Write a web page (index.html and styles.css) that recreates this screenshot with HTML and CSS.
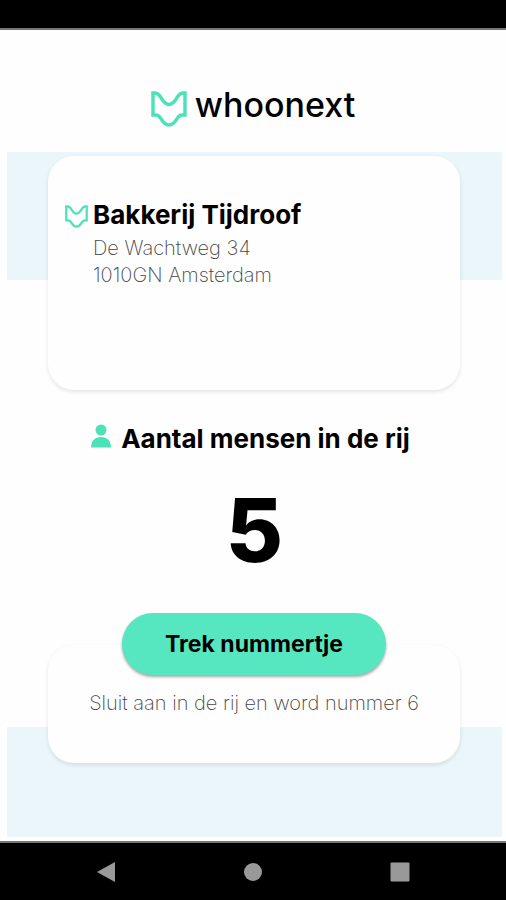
FILE: index.html
```html
<!DOCTYPE html>
<html lang="nl">
<head>
<meta charset="utf-8">
<meta name="viewport" content="width=device-width, initial-scale=1">
<title>whoonext</title>
<link rel="stylesheet" href="styles.css">
</head>
<body>
<div class="status-bar"></div>
<header class="brand">
  <svg class="brand-mark" viewBox="0 0 36 36" aria-hidden="true"><path d="M2 2H4C11 2 10 13.500 18 13.500S25 2 32 2H34V24H31C25 24 26 34 18 34S11 24 5 24H2Z"/></svg>
  <span class="brand-name">whoonext</span>
</header>
<main class="content">
  <section class="shop">
    <div class="card shop-card">
      <svg class="shop-mark" viewBox="0 0 36 36" aria-hidden="true"><path d="M2 2H4C11 2 10 13.500 18 13.500S25 2 32 2H34V24H31C25 24 26 34 18 34S11 24 5 24H2Z"/></svg>
      <div>
        <h1 class="title">Bakkerij Tijdroof</h1>
        <address class="detail">De Wachtweg 34<br>1010GN Amsterdam</address>
      </div>
    </div>
  </section>
  <section class="queue">
    <h2 class="title queue-title">
      <svg class="person" viewBox="0 0 20 24" aria-hidden="true"><circle cx="10" cy="6" r="5.500"/><path d="M0 23.500C0 17 4 13 10 13S20 17 20 23.500Z"/></svg>
      Aantal mensen in de rij
    </h2>
    <p class="count">5</p>
  </section>
  <section class="join">
    <div class="card join-card">
      <button class="join-button" type="button">Trek nummertje</button>
      <p class="detail">Sluit aan in de rij en word nummer 6</p>
    </div>
  </section>
</main>
<nav class="nav-bar">
  <button type="button" aria-label="Terug"><svg viewBox="0 0 20 22"><path d="M1 11L19 1V21Z"/></svg></button>
  <button type="button" aria-label="Start"><svg viewBox="0 0 20 22"><circle cx="10" cy="11" r="9"/></svg></button>
  <button type="button" aria-label="Overzicht"><svg viewBox="0 0 20 22"><rect x="0.500" y="1.500" width="19" height="19" rx="1"/></svg></button>
</nav>
</body>
</html>
```
FILE: styles.css
```css
* { box-sizing: border-box; }
body {
  margin: 0;
  min-height: 100vh;
  display: flex;
  flex-direction: column;
  background: #fefefe;
  color: #000;
  font-family: Inter, "Liberation Sans", sans-serif;
}
h1, h2, p { margin: 0; }
.status-bar {
  height: 30px;
  background: #000;
  border-bottom: 2px solid #777;
}
.brand {
  height: 122px;
  padding-top: 36px;
  display: flex;
  justify-content: center;
  align-items: center;
  gap: 8px;
}
.brand-mark { width: 36px; height: 36px; }
.brand-mark path, .shop-mark path {
  fill: none;
  stroke: #4ce2b8;
  stroke-width: 3.5;
}
.brand-name {
  margin-top: -8px;
  font-family: Inter, sans-serif;
  font-size: 34px;
  font-weight: 500;
  line-height: 40px;
}
.content {
  flex: 1;
  display: flex;
  flex-direction: column;
  padding: 0 4px 4px 7px;
}
.shop {
  padding: 4px 42px 0 41px;
  background: linear-gradient(#ebf6fb, #ebf6fb) top / 100% 128px no-repeat;
}
.card {
  background: #fefefe;
  border-radius: 26px;
  box-shadow: 0 2px 4px rgba(0, 0, 0, 0.1);
}
.shop-card {
  min-height: 234px;
  padding: 44px 17px;
  display: flex;
  gap: 5px;
}
.shop-mark { width: 23px; height: 23px; margin-top: 5px; }
.title {
  font-size: 26px;
  font-weight: 700;
  line-height: 30px;
}
.detail {
  color: #444;
  font-size: 20px;
  font-style: normal;
  font-weight: 200;
  line-height: 27px;
}
.shop .detail { margin-top: 5px; }
.queue {
  padding-top: 34px;
  text-align: center;
}
.queue-title {
  display: flex;
  justify-content: center;
  gap: 10px;
  padding-right: 8px;
}
.person { width: 20px; height: 24px; fill: #4ce2b8; }
.count {
  margin-top: 26px;
  font-size: 88px;
  font-weight: 800;
  line-height: 100px;
}
.join {
  flex: 1;
  padding: 65px 42px 74px 41px;
  background: linear-gradient(#ebf6fb, #ebf6fb) bottom / 100% 110px no-repeat;
}
.join-card {
  min-height: 118px;
  display: flex;
  flex-direction: column;
  align-items: center;
  gap: 15px;
}
.join-button {
  margin-top: -32px;
  padding: 16px 43px;
  border: 0;
  border-radius: 31px;
  background: #56e7c1;
  box-shadow: 0 2px 3px rgba(0, 0, 0, 0.35);
  color: #000;
  font: 700 23px/30px Inter, "Liberation Sans", sans-serif;
}
.nav-bar {
  height: 59px;
  border-top: 2px solid #777;
  background: #000;
  display: flex;
  justify-content: space-between;
  align-items: center;
  padding: 0 96px;
}
.nav-bar button { padding: 0; border: 0; background: none; }
.nav-bar svg { display: block; width: 20px; height: 22px; fill: #999; }
```
